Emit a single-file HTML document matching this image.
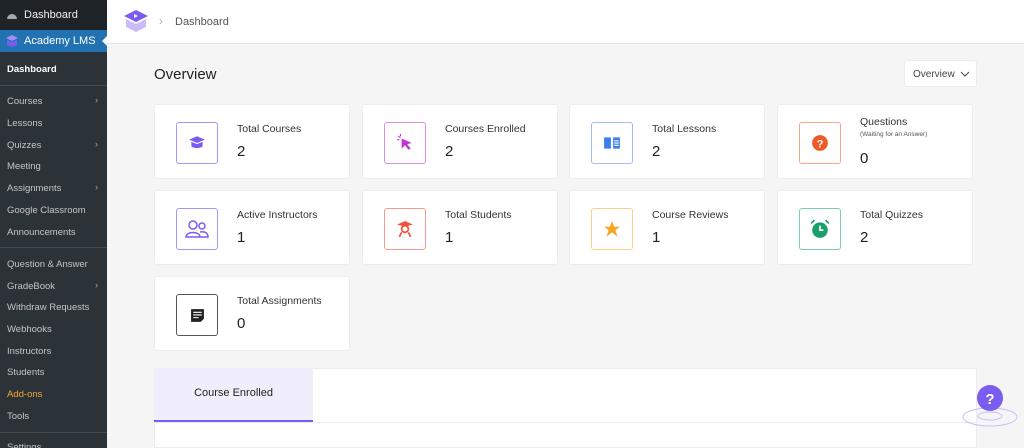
<!DOCTYPE html>
<html><head><meta charset="utf-8"><style>
*{box-sizing:border-box;margin:0;padding:0}
html,body{width:1024px;height:448px;overflow:hidden}
body{background:#f5f5f5;font-family:"Liberation Sans",sans-serif;position:relative}
#sb{position:absolute;left:0;top:0;width:107px;height:448px;background:#2c3338}
#sb .top{height:30px;background:#1d2327;color:#f0f0f1;font-size:11px;display:flex;align-items:center;padding-left:24px;position:relative}
#sb .act{height:22px;background:#2271b1;color:#fff;font-size:11px;display:flex;align-items:center;padding-left:24px;position:relative}
#sb .act:after{content:"";position:absolute;right:0;top:6px;border:5px solid transparent;border-right-color:#f5f5f5}
.si{position:absolute;left:7px;font-size:9.5px;color:#c3c4c7}
.ar{position:absolute;left:95px;font-size:9px;color:#a7aaad}
.sep{position:absolute;left:0;width:107px;height:1px;background:#44494e}
#top{position:absolute;left:107px;top:0;right:0;height:44px;background:#fff;border-bottom:1px solid #e8e8e8}
.card{position:absolute;width:196px;height:75px;background:#fff;border:1px solid #ededed;border-radius:3px}
.ib{position:absolute;left:21px;top:17px;width:42px;height:42px;border:1px solid;border-radius:3px;display:flex;align-items:center;justify-content:center}
.lb{position:absolute;left:82px;top:18px;font-size:10.5px;color:#333}
.nm{position:absolute;left:82px;top:38px;font-size:15px;color:#222}
</style></head><body>
<div id="sb">
<div class="top"><svg style="position:absolute;left:6px;top:10px" width="12" height="11" viewBox="0 0 12 11"><path d="M1 9a5 5 0 0 1 10 0z" fill="#a7aaad"/></svg>Dashboard</div>
<div class="act"><svg style="position:absolute;left:6px;top:5px" width="12" height="12" viewBox="0 0 12 12"><path d="M6 0l6 3-6 3-6-3z" fill="#a58cf5"/><path d="M1 5v5l5 2 5-2V5L6 7z" fill="#7b5cf0"/></svg>Academy LMS</div>
<div class="si" style="top:64px;color:#fff;font-weight:bold">Dashboard</div>
<div class="sep" style="top:85px"></div>
<div class="si" style="top:96px">Courses</div><div class="ar" style="top:95px">›</div>
<div class="si" style="top:118px">Lessons</div>
<div class="si" style="top:140px">Quizzes</div><div class="ar" style="top:139px">›</div>
<div class="si" style="top:161px">Meeting</div>
<div class="si" style="top:183px">Assignments</div><div class="ar" style="top:182px">›</div>
<div class="si" style="top:205px">Google Classroom</div>
<div class="si" style="top:227px">Announcements</div>
<div class="sep" style="top:247px"></div>
<div class="si" style="top:259px">Question &amp; Answer</div>
<div class="si" style="top:281px">GradeBook</div><div class="ar" style="top:280px">›</div>
<div class="si" style="top:302px">Withdraw Requests</div>
<div class="si" style="top:324px">Webhooks</div>
<div class="si" style="top:346px">Instructors</div>
<div class="si" style="top:367px">Students</div>
<div class="si" style="top:389px;color:#f0a830">Add-ons</div>
<div class="si" style="top:411px">Tools</div>
<div class="sep" style="top:432px"></div>
<div class="si" style="top:442px">Settings</div>
</div>
<div id="top">
<svg style="position:absolute;left:16px;top:9px" width="26" height="24" viewBox="0 0 26 24"><path d="M13 1l12 6-12 6L1 7z" fill="#7b5cf0"/><path d="M11 5l4 2-4 2z" fill="#fff"/><path d="M3 10v8l10 5 10-5v-8l-10 5z" fill="#c9bcf9"/></svg>
<div style="position:absolute;left:52px;top:14px;font-size:12px;color:#aaa">›</div>
<div style="position:absolute;left:68px;top:16px;font-size:11px;color:#555">Dashboard</div>
</div>
<div style="position:absolute;left:154px;top:66px;font-size:15px;color:#222">Overview</div>
<div style="position:absolute;left:904px;top:60px;width:73px;height:27px;background:#fff;border:1px solid #ececec;border-radius:3px;font-size:10px;color:#444;padding:8px 0 0 8px">Overview <svg width="10" height="6" viewBox="0 0 10 6" style="margin-left:3px"><path d="M1 1l4 4 4-4" stroke="#444" fill="none"/></svg></div>

<div class="card" style="left:154px;top:104px"><div class="ib" style="border-color:#a995f7"><svg width="18" height="16" viewBox="0 0 16 14"><path d="M8 1l7 3-7 3-7-3z" fill="#7b5cf0"/><path d="M3 6v4c2 2 8 2 10 0V6L8 8z" fill="#7b5cf0"/></svg></div><div class="lb">Total Courses</div><div class="nm">2</div></div>
<div class="card" style="left:362px;top:104px"><div class="ib" style="border-color:#dc8ee8"><svg width="18" height="18" viewBox="0 0 16 16"><path d="M5 4l9 4-4 1 3 4-2 1-3-4-3 3z" fill="#c135d6"/><path d="M2 2l2 1M1 5h2M4 0v2" stroke="#c135d6"/></svg></div><div class="lb">Courses Enrolled</div><div class="nm">2</div></div>
<div class="card" style="left:569px;top:104px"><div class="ib" style="border-color:#9cbdf7"><svg width="18" height="16" viewBox="0 0 16 14"><path d="M1 2h6v10H1zM9 2h6v10H9z" fill="#3d7cf0"/><path d="M10 5h4M10 7h4M10 9h4" stroke="#fff"/></svg></div><div class="lb">Total Lessons</div><div class="nm">2</div></div>
<div class="card" style="left:777px;top:104px"><div class="ib" style="border-color:#f5a78a"><svg width="18" height="18" viewBox="0 0 16 16"><circle cx="8" cy="8" r="7" fill="#f05a28"/><text x="8" y="12" font-size="10" fill="#fff" text-anchor="middle" font-family="Liberation Sans" font-weight="bold">?</text></svg></div><div class="lb" style="top:11px">Questions</div><div style="position:absolute;left:82px;top:26px;font-size:6.5px;color:#555">(Waiting for an Answer)</div><div class="nm" style="top:45px">0</div></div>

<div class="card" style="left:154px;top:190px"><div class="ib" style="border-color:#a995f7"><svg width="24" height="20" viewBox="0 0 24 20"><circle cx="8" cy="6" r="4" stroke="#7b5cf0" fill="none" stroke-width="1.5"/><circle cx="17" cy="7" r="3" stroke="#7b5cf0" fill="none" stroke-width="1.5"/><path d="M1 18c0-6 14-6 14 0zM15 13c5-1 8 1 8 5h-8" stroke="#7b5cf0" fill="none" stroke-width="1.5"/></svg></div><div class="lb">Active Instructors</div><div class="nm">1</div></div>
<div class="card" style="left:362px;top:190px"><div class="ib" style="border-color:#f59a90"><svg width="18" height="18" viewBox="0 0 16 16"><path d="M8 1l7 3-7 2-7-2z" fill="#f0523e"/><circle cx="8" cy="8" r="3" stroke="#f0523e" fill="none" stroke-width="1.5"/><path d="M3 15l2-4M13 15l-2-4" stroke="#f0523e" stroke-width="1.5"/></svg></div><div class="lb">Total Students</div><div class="nm">1</div></div>
<div class="card" style="left:569px;top:190px"><div class="ib" style="border-color:#fbd088"><svg width="18" height="18" viewBox="0 0 16 16"><path d="M8 1l2 5h5l-4 3 2 6-5-4-5 4 2-6-4-3h5z" fill="#f6a623"/></svg></div><div class="lb">Course Reviews</div><div class="nm">1</div></div>
<div class="card" style="left:777px;top:190px"><div class="ib" style="border-color:#7ccfae"><svg width="20" height="20" viewBox="0 0 18 18"><circle cx="9" cy="10" r="7" fill="#1aa069"/><path d="M9 6v4h3" stroke="#fff" fill="none" stroke-width="1.5"/><path d="M1 4l3-3M17 4l-3-3" stroke="#1aa069" stroke-width="1.5"/></svg></div><div class="lb">Total Quizzes</div><div class="nm">2</div></div>

<div class="card" style="left:154px;top:276px"><div class="ib" style="border-color:#555"><svg width="15" height="15" viewBox="0 0 14 14"><path d="M1 1h12v9l-3 3H1z" fill="#222"/><path d="M3 4h8M3 6.5h8M3 9h5" stroke="#fff"/></svg></div><div class="lb">Total Assignments</div><div class="nm">0</div></div>

<div style="position:absolute;left:154px;top:368px;width:823px;height:80px;background:#fff;border:1px solid #ececec"></div>
<div style="position:absolute;left:154px;top:368px;width:159px;height:54px;background:#f0eefc;border-bottom:2px solid #7b5cf0;font-size:11px;color:#222;text-align:center;padding-top:19px">Course Enrolled</div>
<div style="position:absolute;left:154px;top:422px;width:823px;height:1px;background:#ececec"></div>
<svg style="position:absolute;left:960px;top:384px" width="62" height="44" viewBox="0 0 62 44"><ellipse cx="30" cy="33" rx="27" ry="9" fill="none" stroke="#c8bdfa"/><ellipse cx="30" cy="32" rx="12" ry="4" fill="none" stroke="#c8bdfa"/><circle cx="30" cy="14" r="13" fill="#7b5cf0"/><text x="30" y="20" font-size="15" font-weight="bold" fill="#fff" text-anchor="middle" font-family="Liberation Sans">?</text></svg>
</body></html>
